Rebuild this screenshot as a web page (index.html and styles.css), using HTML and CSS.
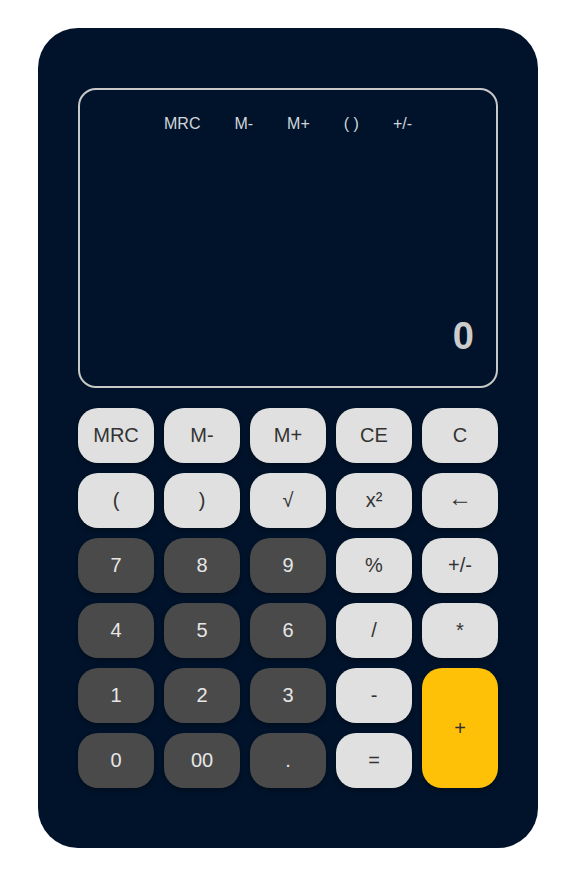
FILE: index.html
```html
<!DOCTYPE html>
<html>
<head>
<meta charset="utf-8">
<link rel="stylesheet" href="styles.css">
</head>
<body>
<div class="calc">
  <div class="display">
    <div class="labels">
      <span>MRC</span><span>M-</span><span>M+</span><span>( )</span><span>+/-</span>
    </div>
    <div class="value">0</div>
  </div>
  <div class="keys">
    <button class="key light">MRC</button>
    <button class="key light">M-</button>
    <button class="key light">M+</button>
    <button class="key light">CE</button>
    <button class="key light">C</button>
    <button class="key light">(</button>
    <button class="key light">)</button>
    <button class="key light">√</button>
    <button class="key light">x²</button>
    <button class="key light arrow">←</button>
    <button class="key dark">7</button>
    <button class="key dark">8</button>
    <button class="key dark">9</button>
    <button class="key light">%</button>
    <button class="key light">+/-</button>
    <button class="key dark">4</button>
    <button class="key dark">5</button>
    <button class="key dark">6</button>
    <button class="key light">/</button>
    <button class="key light">*</button>
    <button class="key dark">1</button>
    <button class="key dark">2</button>
    <button class="key dark">3</button>
    <button class="key light">-</button>
    <button class="key plus">+</button>
    <button class="key dark">0</button>
    <button class="key dark">00</button>
    <button class="key dark">.</button>
    <button class="key light">=</button>
  </div>
</div>
</body>
</html>
```
FILE: styles.css
```css
html, body {
  margin: 0;
  padding: 0;
  background: #ffffff;
}
body {
  padding: 28px 0 0 38px;
  font-family: "Liberation Sans", Arial, sans-serif;
}
.calc {
  width: 500px;
  height: 820px;
  box-sizing: border-box;
  padding: 60px 40px;
  background: #00132a;
  border-radius: 40px;
}
.display {
  height: 300px;
  box-sizing: border-box;
  border: 2px solid #c8c8c8;
  border-radius: 18px;
  padding: 25px 22px 28px 22px;
  display: flex;
  flex-direction: column;
  justify-content: space-between;
}
.labels {
  display: flex;
  justify-content: center;
  gap: 34px;
  font-size: 16px;
  line-height: 18px;
  color: #d0d6dc;
}
.value {
  text-align: right;
  font-size: 38px;
  font-weight: bold;
  line-height: 44px;
  color: #cccccc;
}
.keys {
  margin-top: 20px;
  display: grid;
  grid-template-columns: repeat(5, 76px);
  grid-auto-rows: 55px;
  gap: 10px;
}
.key {
  border: none;
  border-radius: 20px;
  font-family: "Liberation Sans", Arial, sans-serif;
  font-size: 20px;
  padding: 0;
  box-shadow: 0 2px 4px rgba(0, 0, 0, 0.35);
}
.light {
  background: #e0e0e0;
  color: #333333;
}
.dark {
  background: #4a4a4a;
  color: #e6e6e6;
}
.plus {
  background: #ffc107;
  color: #333333;
  grid-row: span 2;
}
.arrow {
  font-size: 24px;
  padding-bottom: 6px;
}
```
